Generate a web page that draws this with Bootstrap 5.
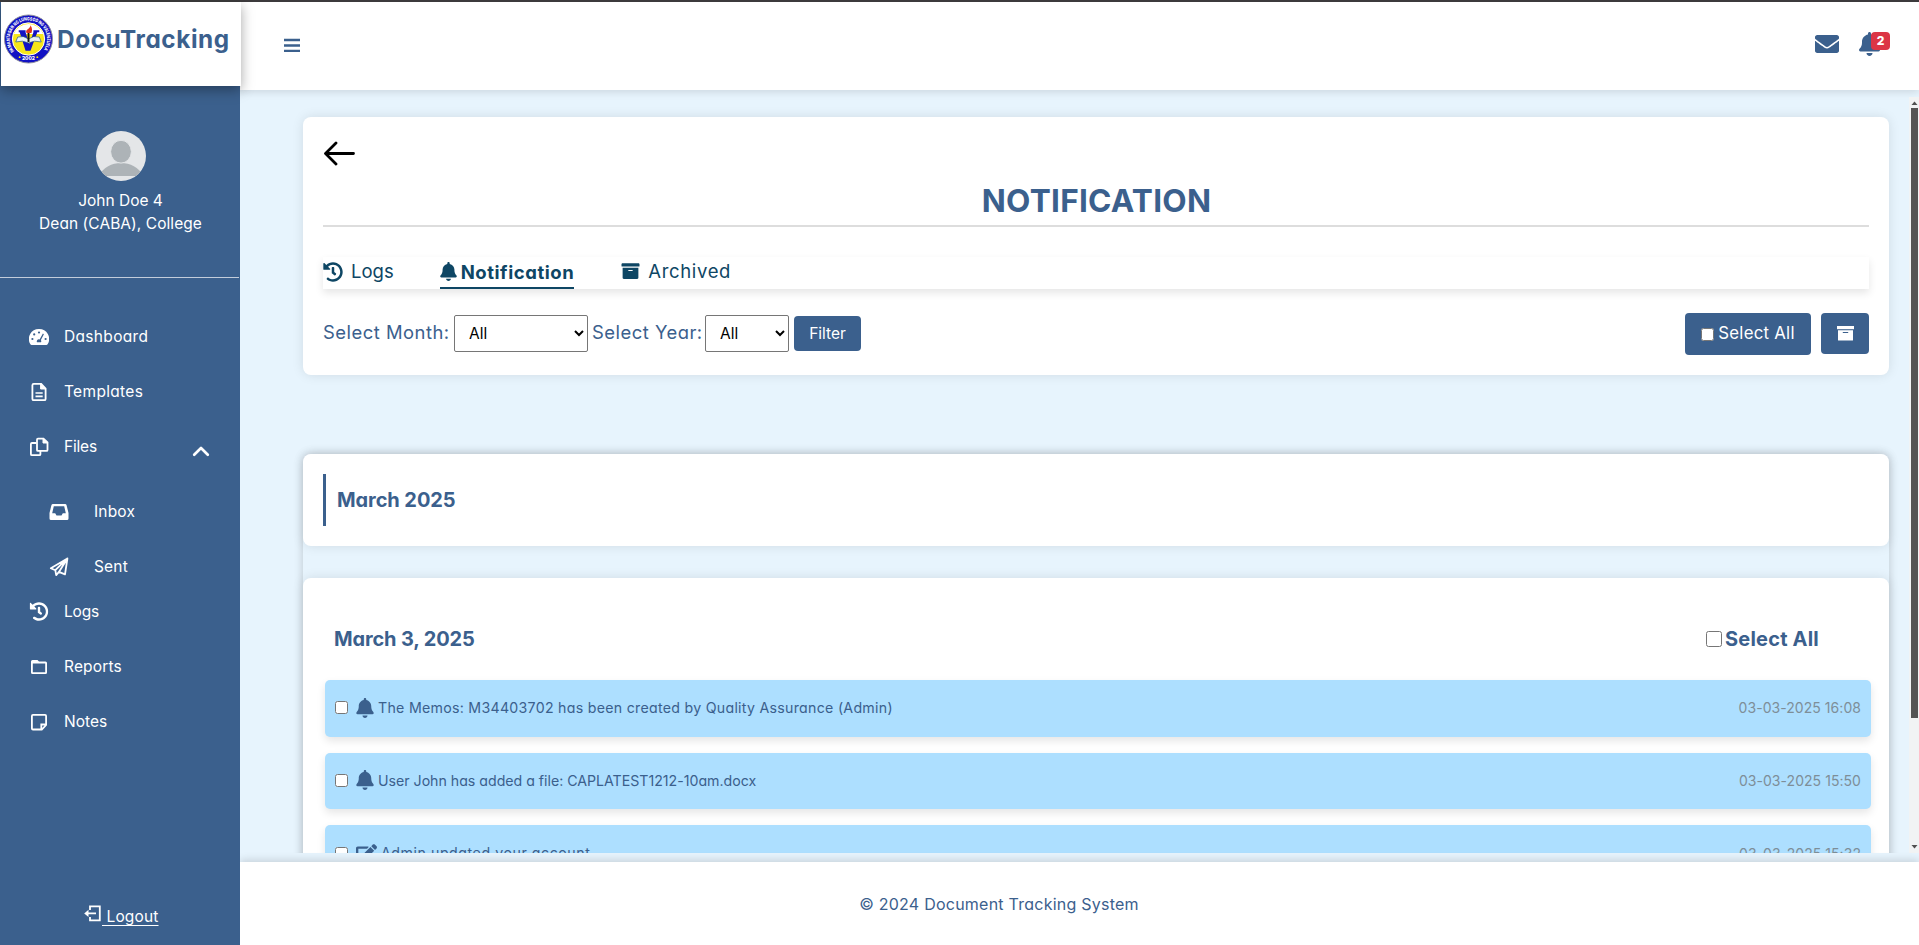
<!DOCTYPE html>
<html lang="en">
<head>
<meta charset="utf-8">
<meta name="viewport" content="width=device-width, initial-scale=1">
<title>DocuTracking - Notification</title>
<link href="https://cdn.jsdelivr.net/npm/bootstrap@5.3.0/dist/css/bootstrap.min.css" rel="stylesheet">
<style>
:root{--navy:#3b608d;--deep:#0e4664;--sky:#e7f4fd}
body{font-family:Inter,"Open Sans",sans-serif;font-feature-settings:"cv11";font-size:15.5px;color:var(--navy);background:var(--sky);height:945px;overflow:hidden}
svg{display:block;flex:none}
.topline{height:2px;background:#3e3c3e}
.shell{height:943px}
/* sidebar */
.side{width:240px;background:var(--navy);color:#fff;position:relative;z-index:1}
.side a{color:#fff}
.brandbox{height:84px;width:240px;margin-left:1px;padding:0 0 11px 3px;background:#fff;color:var(--navy);box-shadow:0 4px 12px rgba(0,0,0,.35);z-index:2}
.brandbox b{font-size:24.3px;letter-spacing:.6px;line-height:36px;margin-left:4px}
.profile{height:192px;padding-top:45px;border-bottom:1px solid #c3cddb;width:239px;line-height:23px;padding-left:2px}
.profile svg{margin:0 0 7px 1px}
.dean{letter-spacing:.06px}
.profile div{padding-top:1px;margin-bottom:-1px}
.menu{padding-top:31px}
.menu a{height:55px;padding-left:29px;text-decoration:none}
.menu a>span{padding-top:1px}
.menu a>svg{width:20px;margin-right:15px}
.menu .sub{padding-top:10px;margin-bottom:-10px}
.menu .sub a{padding-left:49px}
.menu .sub a>svg{margin-right:25px}
.caret{margin:9px 29px 0 auto}
.menu a>svg.caret{width:18px;margin-right:30px}
.w35{letter-spacing:.33px}.w17{letter-spacing:.17px}.wm{letter-spacing:-.2px}
.logout{height:40px;padding-left:84px;text-decoration:underline;text-underline-offset:3px;white-space:pre}
.logout span{letter-spacing:.15px}
/* main column */
.mainhead{height:88px;background:#fff;box-shadow:0 2px 8px rgba(0,0,0,.12);padding:0 30px 0 44px}
.mainhead .burger{margin-top:36px}
.mainhead .mail{margin-top:30px}
.bellbox{margin:30px 9px 0 20px}
.pill{left:12px;top:0;width:19px;height:18px;border-radius:4px;background:#dc3545;color:#fff;font-size:12px;line-height:18px;font-weight:800}
.viewport{height:756px;margin-top:7px}
.scroller{padding:20px 20px 0 63px}
.panel{background:#fff;border-radius:8px;box-shadow:0 0 12px rgba(0,0,0,.1)}
.p-top{height:258px;padding:0 20px}
.backrow{height:63px;padding:24px 0 0 1px}
.ttl{height:47px;border-bottom:2px solid #ddd;font-size:31.6px;line-height:42px;font-weight:700;letter-spacing:.25px;padding-left:1px}
.tabs{height:32px;margin-top:30px;color:var(--deep);font-size:18.5px;box-shadow:0 4px 8px rgba(0,0,0,.1)}
.tabs a{color:inherit;text-decoration:none;height:32px;line-height:29px}
.tabs svg{margin-top:5px}
.tabs .on{border-bottom:2px solid var(--deep);font-weight:700;letter-spacing:.55px;margin:0 47px 0 46px;line-height:31px}
.tabs .arch{letter-spacing:.66px}
.filters{height:42px;margin-top:24px}
.flabel{font-size:18.4px;line-height:39px;letter-spacing:.5px}
.fm{width:127px}
.fy{width:110px}
.filters select{height:37px;border:1px solid #767676;border-radius:2px;background:#fff;color:#000;padding:0 10px;font-size:15.5px;font-feature-settings:inherit}
.sel-m{width:134px;margin:2px 4px 0 4px}
.sel-y{width:84px;margin:2px 5px 0 3px}
.bt{background:var(--navy);color:#fff;border:0;border-radius:4px;padding:0;font-size:15.5px}
.bt:hover{background:var(--navy);color:#fff}
.bt-f{width:67px;height:35px;margin-top:3px}
.bt-s{width:126px;height:42px;font-size:16.8px;letter-spacing:.25px}
.bt-a{width:48px;height:41px;margin-left:10px}
input[type=checkbox]{margin:0;width:13px;height:13px;flex:none}
.months{margin-top:79px;border-radius:8px;box-shadow:0 0 10px rgba(0,0,0,.19);height:640px}
.mhead{height:92px;padding:20px}
.mhead div{height:52px;border-left:3px solid var(--navy);padding-left:11px;font-size:20px;font-weight:700;line-height:52px;letter-spacing:-.08px}
.days{margin-top:32px;height:600px;padding:42px 18px 0 22px}
.dayhead{height:60px;padding:0 52px 22px 9px;font-size:20px;font-weight:700}
.dayhead input{width:16px;height:16px;margin-right:3px}
.note{height:56.67px;margin-bottom:16px;background:#addfff;border-radius:5px;padding:0 10px 1px 10px;box-shadow:0 4px 8px rgba(0,0,0,.1);font-size:14.2px}
.note time{font-size:14px;color:#7e8e98;letter-spacing:.05px}
.track{width:10px;background:#f1f3f4}
.thumb{width:7px;height:610px;margin:0 1px 0 2px;background:#545454}
.foot{height:83px;margin-top:9px;background:#fff;box-shadow:0 -2px 8px rgba(0,0,0,.14);font-size:16px;letter-spacing:.24px;line-height:85px}
.foot div{width:1518px}
</style>
</head>
<body>
<svg width="0" height="0" class="d-none">
<symbol id="bell" viewBox="0 0 448 512"><path d="M224 0c-17.7 0-32 14.3-32 32V51.200C119 66 64 130.600 64 208v18.800c0 47-17.300 92.400-48.500 127.600l-7.400 8.300c-8.400 9.400-10.400 22.900-5.300 34.400S19.400 416 32 416H416c12.600 0 24-7.400 29.200-18.900s3.100-25-5.300-34.400l-7.400-8.300C401.300 319.200 384 273.900 384 226.800V208c0-77.400-55-142-128-156.800V32c0-17.700-14.300-32-32-32zm45.300 493.300c12-12 18.700-28.300 18.700-45.300H160c0 17 6.700 33.300 18.700 45.300s28.300 18.700 45.300 18.700s33.300-6.700 45.300-18.700z"/></symbol>
<symbol id="history" viewBox="0 0 512 512"><path d="M504 255.531c.253 136.640-111.180 248.372-247.820 248.468-59.015.042-113.223-20.530-155.822-54.911-11.077-8.940-11.905-25.541-1.839-35.607l11.267-11.267c8.609-8.609 22.353-9.551 31.891-1.984C173.062 425.135 212.781 440 256 440c101.705 0 184-82.311 184-184 0-101.705-82.311-184-184-184-48.814 0-93.149 18.969-126.068 49.932l50.754 50.754c10.080 10.080 2.941 27.314-11.313 27.314H24c-8.837 0-16-7.163-16-16V38.627c0-14.254 17.234-21.393 27.314-11.314l49.372 49.372C129.209 34.136 189.552 8 256 8c136.810 0 247.747 110.780 248 247.531zm-180.912 78.784l9.823-12.630c8.138-10.463 6.253-25.542-4.210-33.679L288 256.349V152c0-13.255-10.745-24-24-24h-16c-13.255 0-24 10.745-24 24v135.651l65.409 50.874c10.463 8.137 25.541 6.253 33.679-4.210z"/></symbol>
</svg>
<div class="topline"></div>
<div class="shell d-flex">
<aside class="side d-flex flex-column flex-shrink-0">
  <div class="brandbox d-flex align-items-center flex-shrink-0">
    <svg width="49" height="50" viewBox="0 0 50 50">
      <circle cx="25" cy="25" r="24.500" fill="#1212c4" stroke="#8f8f9c"/>
      <circle cx="25" cy="25" r="16.500" fill="#f7e61a" stroke="#fff"/>
      <path d="M10 20a16 16 0 0 1 30 0z" fill="#fff"/>
      <path d="M15 16h7v2l4 12 4-12v-2h6v2h-2l-7 19h-5l-6-19h-1z" fill="#1212c4"/>
      <path d="M14 23q6-2 11 2 5-4 11-2l2 5q-7-2-13 1-6-3-13-1z" fill="#e9f1f6" stroke="#2b5978" stroke-width=".7"/>
      <path d="M25 18v10" stroke="#111" stroke-width="2"/><path d="M23 19c-2-4 4-4 4-8 2 3 2 5 1 8z" fill="#e0331f"/>
      <path id="ring" d="M10.500 37.300A19 19 0 1 1 39.500 37.300" fill="none"/>
      <text font-size="4.800" font-weight="800" fill="#fff"><textPath href="#ring" textLength="84" lengthAdjust="spacingAndGlyphs">PAMANTASAN NG LUNGSOD NG VALENZUELA</textPath></text>
      <text x="25" y="46.500" font-size="5" font-weight="800" fill="#fff" text-anchor="middle">2002</text>
      <circle cx="16" cy="43.500" r="1" fill="#f7e61a"/><circle cx="34" cy="43.500" r="1" fill="#f7e61a"/>
    </svg>
    <b>DocuTracking</b>
  </div>
  <div class="profile d-flex flex-column align-items-center flex-shrink-0">
    <svg width="50" height="50" viewBox="0 0 50 50"><clipPath id="c"><circle cx="25" cy="25" r="25"/></clipPath><g clip-path="url(#c)"><path fill="#e4e6e8" d="M0 0h50v50H0z"/><path fill="#adb3b7" d="M3 45c4-9 13-13 22-13s18 4 22 13z"/><ellipse cx="25" cy="20.700" rx="10.400" ry="11.400" fill="#adb3b7" stroke="#e4e6e8" stroke-width="1"/></g></svg>
    <div>John Doe 4</div>
    <div class="dean">Dean (CABA), College</div>
  </div>
  <nav class="menu">
    <a class="d-flex align-items-center" href="#"><svg height="18" viewBox="0 0 20 18"><path fill="#fff" d="M10 1a10 10 0 0 0-8.600 15.300c.3.500.7.700 1.200.7h14.800c.5 0 .9-.2 1.200-.7A10 10 0 0 0 10 1z"/><g fill="#3b608d"><circle cx="10" cy="4.500" r="1.100"/><circle cx="5.200" cy="6.400" r="1.100"/><circle cx="3.400" cy="11" r="1.100"/><circle cx="16.600" cy="11" r="1.100"/><path d="M13.900 5.600l1 .6-3 5.800a2 2 0 0 1 .1 2.300H8a2 2 0 0 1 2.600-2.800z"/></g></svg><span class="w35">Dashboard</span></a>
    <a class="d-flex align-items-center" href="#"><svg height="20" viewBox="0 0 20 20" fill="none" stroke="#fff" stroke-width="1.800"><path d="M5.200 1.900h7L16.600 6.500v10.400q0 1.300-1.300 1.300H4.700q-1.300 0-1.300-1.300V3.200q0-1.300 1.300-1.300z"/><path d="M11.600 2v5h5z" fill="#fff" stroke-width="1"/><path d="M6.500 11h7.200M6.500 14.400h7.200" stroke-width="1.600"/></svg><span class="w35">Templates</span></a>
    <a class="d-flex align-items-center" href="#"><svg height="20" viewBox="0 0 20 20" fill="none" stroke="#fff" stroke-width="1.800"><path d="M9 1.700h5.500l4 3.800v7.400q0 1-1 1H9q-1 0-1-1V2.700q0-1 1-1z"/><path d="M14 2v4h4z" fill="#fff" stroke-width="1"/><path d="M7.500 6H3Q1.900 6 1.900 7v10.200q0 1 1.100 1h7.400q1 0 1-1V14"/></svg><span class="wm">Files</span><svg class="caret" height="12" viewBox="0 0 18 12" fill="none" stroke="#fff" stroke-width="2.700" stroke-linecap="round" stroke-linejoin="round"><path d="M2.200 9.700L9 3l6.800 6.700"/></svg></a>
    <div class="sub">
      <a class="d-flex align-items-center" href="#"><svg height="18" viewBox="0 0 20 18"><path fill="#fff" fill-rule="evenodd" d="M4 1h12q1.300 0 1.600 1.300L19.500 10v5.500q0 1.500-1.500 1.500H2q-1.500 0-1.500-1.500V10l1.900-7.700Q2.700 1 4 1zm.8 2.200L3.200 10.300h3L7.500 12.600h5l1.300-2.300h3l-1.600-7.100z"/></svg><span class="w17">Inbox</span></a>
      <a class="d-flex align-items-center" href="#"><svg height="20" viewBox="0 0 20 20" fill="none" stroke="#fff" stroke-width="1.800" stroke-linejoin="round"><path d="M18.400 1.500L1.800 11.200l4.500 2 .9 5 2.700-3.300 6.100 2.500zM18.400 1.500L6.300 13.200M18.400 1.500L9.900 14.900"/></svg><span class="w17">Sent</span></a>
    </div>
    <a class="d-flex align-items-center" href="#"><svg height="19" viewBox="0 0 19 19" fill="#fff"><use href="#history"/></svg><span class="wm">Logs</span></a>
    <a class="d-flex align-items-center" href="#"><svg height="16" viewBox="0 0 20 16"><path fill="#fff" fill-rule="evenodd" d="M3.500 1h5l1.500 1.500h6.500q1.500 0 1.500 1.500v9.500q0 1.500-1.500 1.500h-13Q2 15 2 13.500v-11Q2 1 3.500 1zM3.800 4.400v8.900h12.400V4.400z"/></svg><span class="w17">Reports</span></a>
    <a class="d-flex align-items-center" href="#"><svg height="18" viewBox="0 0 20 18" fill="none" stroke="#fff" stroke-width="1.800"><path d="M4 1.900h12q1.100 0 1.100 1.100v9l-4.300 4.500H4q-1.100 0-1.100-1.100V3Q2.900 1.900 4 1.900zM12.300 16.500v-5h4.900"/></svg><span>Notes</span></a>
  </nav>
  <a class="logout d-flex mt-auto" href="#"><svg width="18" height="17" viewBox="0 0 18 17" fill="none" stroke="#fff" stroke-width="1.800"><path d="M6 5V1.300h9.800v14H6V12M12 8.400H3"/><path d="M4.500 4.700v7.400L.2 8.400z" fill="#fff" stroke="none"/></svg><span> Logout</span></a>
</aside>
<main class="flex-grow-1 d-flex flex-column">
  <header class="mainhead d-flex align-items-start">
    <svg class="burger" width="16" height="15" viewBox="0 0 16 15" stroke="#3b608d" stroke-width="2.300"><path d="M0 2h16M0 7.500h16M0 12.900h16"/></svg>
    <svg class="mail ms-auto" width="24" height="24" viewBox="0 0 512 512" fill="#3b608d"><path d="M502.300 190.800c3.900-3.100 9.700-.2 9.700 4.700V400c0 26.500-21.500 48-48 48H48c-26.500 0-48-21.500-48-48V195.600c0-5 5.700-7.800 9.700-4.700 22.400 17.400 52.100 39.500 154.100 113.600 21.100 15.400 56.700 47.800 92.200 47.600 35.700.3 72-32.800 92.300-47.600 102-74.100 131.600-96.300 154-113.700zM256 320c23.200.4 56.600-29.200 73.400-41.400 132.700-96.300 142.800-104.700 173.400-128.700 5.800-4.500 9.200-11.500 9.200-18.900v-19c0-26.500-21.500-48-48-48H48c-26.500 0-48 21.500-48 48v19c0 7.400 3.400 14.300 9.200 18.900 30.600 23.900 40.700 32.400 173.400 128.700 16.800 12.200 50.200 41.800 73.400 41.400z"/></svg>
    <div class="bellbox position-relative"><svg width="21" height="24" fill="#3b608d"><use href="#bell"/></svg><span class="pill position-absolute text-center">2</span></div>
  </header>
  <div class="viewport d-flex overflow-hidden">
    <div class="scroller flex-grow-1">
      <section class="panel p-top">
        <div class="backrow"><svg width="31" height="25" viewBox="0 0 31 25" fill="none" stroke="#000" stroke-width="2.800" stroke-linecap="round" stroke-linejoin="round"><path d="M29.500 12.500H1.800M12 1.900L1.500 12.500 12 23.100"/></svg></div>
        <h1 class="ttl text-center mb-0">NOTIFICATION</h1>
        <div class="tabs d-flex">
          <a class="d-flex" href="#"><svg width="20" height="20" fill="currentColor"><use href="#history"/></svg><span class="ms-2">Logs</span></a>
          <a class="on d-flex" href="#"><svg width="17" height="19" class="me-1" fill="currentColor"><use href="#bell"/></svg>Notification</a>
          <a class="arch d-flex" href="#"><svg width="19" height="18" viewBox="0 0 512 512" fill="currentColor" class="me-2"><path d="M32 448c0 17.700 14.300 32 32 32h384c17.700 0 32-14.300 32-32V160H32v288zm160-212c0-6.600 5.400-12 12-12h104c6.600 0 12 5.400 12 12v8c0 6.600-5.400 12-12 12H204c-6.600 0-12-5.400-12-12v-8zM480 32H32C14.300 32 0 46.300 0 64v48c0 8.800 7.200 16 16 16h480c8.800 0 16-7.200 16-16V64c0-17.700-14.300-32-32-32z"/></svg>Archived</a>
        </div>
        <div class="filters d-flex">
          <label class="flabel fm text-nowrap" for="m">Select Month:</label>
          <select id="m" class="sel-m"><option>All</option></select>
          <label class="flabel fy text-nowrap" for="y">Select Year:</label>
          <select id="y" class="sel-y"><option>All</option></select>
          <button class="btn bt bt-f">Filter</button>
          <button class="btn bt bt-s ms-auto d-flex align-items-center justify-content-center"><input type="checkbox" class="me-1">Select All</button>
          <button class="btn bt bt-a d-flex align-items-center justify-content-center"><svg width="17" height="15" viewBox="0 0 17 15" fill="#fff"><path d="M0 0h17v3.200H0z"/><path fill-rule="evenodd" d="M1 4.200h15V14q0 .5-.5.500h-14Q1 14.500 1 14zm4.800 1.900v1h5.400v-1z"/></svg></button>
        </div>
      </section>
      <section class="months">
        <div class="panel mhead"><div>March 2025</div></div>
        <div class="panel days">
          <div class="dayhead d-flex align-items-center"><span style="letter-spacing:-.15px">March 3, 2025</span><input type="checkbox" class="ms-auto"><span style="letter-spacing:.2px">Select All</span></div>
          <div class="note d-flex align-items-center"><input type="checkbox"><svg width="18" height="20" class="ms-2 me-1" fill="#3b608d"><use href="#bell"/></svg><span style="letter-spacing:.27px">The Memos: M34403702 has been created by Quality Assurance (Admin)</span><time class="ms-auto">03-03-2025 16:08</time></div>
          <div class="note d-flex align-items-center"><input type="checkbox"><svg width="18" height="20" class="ms-2 me-1" fill="#3b608d"><use href="#bell"/></svg><span style="letter-spacing:-.02px">User John has added a file: CAPLATEST1212-10am.docx</span><time class="ms-auto">03-03-2025 15:50</time></div>
          <div class="note d-flex align-items-center"><input type="checkbox"><svg width="21" height="19" viewBox="0 0 576 512" class="ms-2 me-1" fill="#3b608d"><path d="M402.600 83.200l90.200 90.200c3.800 3.800 3.800 10 0 13.800L274.400 405.600l-92.800 10.300c-12.400 1.400-22.900-9.100-21.500-21.500l10.300-92.800L388.800 83.200c3.800-3.800 10-3.800 13.800 0zm162-22.900l-48.800-48.800c-15.200-15.200-39.900-15.200-55.200 0l-35.400 35.400c-3.800 3.800-3.800 10 0 13.800l90.200 90.200c3.800 3.800 10 3.800 13.800 0l35.400-35.400c15.200-15.300 15.200-40 0-55.200zM384 346.200V448H64V128h229.800c3.200 0 6.200-1.300 8.500-3.500l40-40c7.600-7.600 2-20.500-8.500-20.500H48C21.500 64 0 85.500 0 112v352c0 26.500 21.500 48 48 48h352c26.500 0 48-21.500 48-48V306.200c0-10.700-12.900-16-20.500-8.500l-40 40c-2.200 2.300-3.500 5.300-3.500 8.500z"/></svg><span style="letter-spacing:.54px">Admin updated your account</span><time class="ms-auto">03-03-2025 15:32</time></div>
        </div>
      </section>
    </div>
    <div class="track d-flex flex-column flex-shrink-0"><svg width="10" height="11" fill="#505050"><path d="M5.500 4.500l3 3.500h-6z"/></svg><div class="thumb"></div><svg class="mt-auto" width="10" height="11" fill="#505050"><path d="M5.500 6.500l3-3.500h-6z"/></svg></div>
  </div>
  <footer class="foot"><div class="text-center">© 2024 Document Tracking System</div></footer>
</main>
</div>
<script src="https://cdn.jsdelivr.net/npm/bootstrap@5.3.0/dist/js/bootstrap.bundle.min.js"></script>
</body>
</html>
